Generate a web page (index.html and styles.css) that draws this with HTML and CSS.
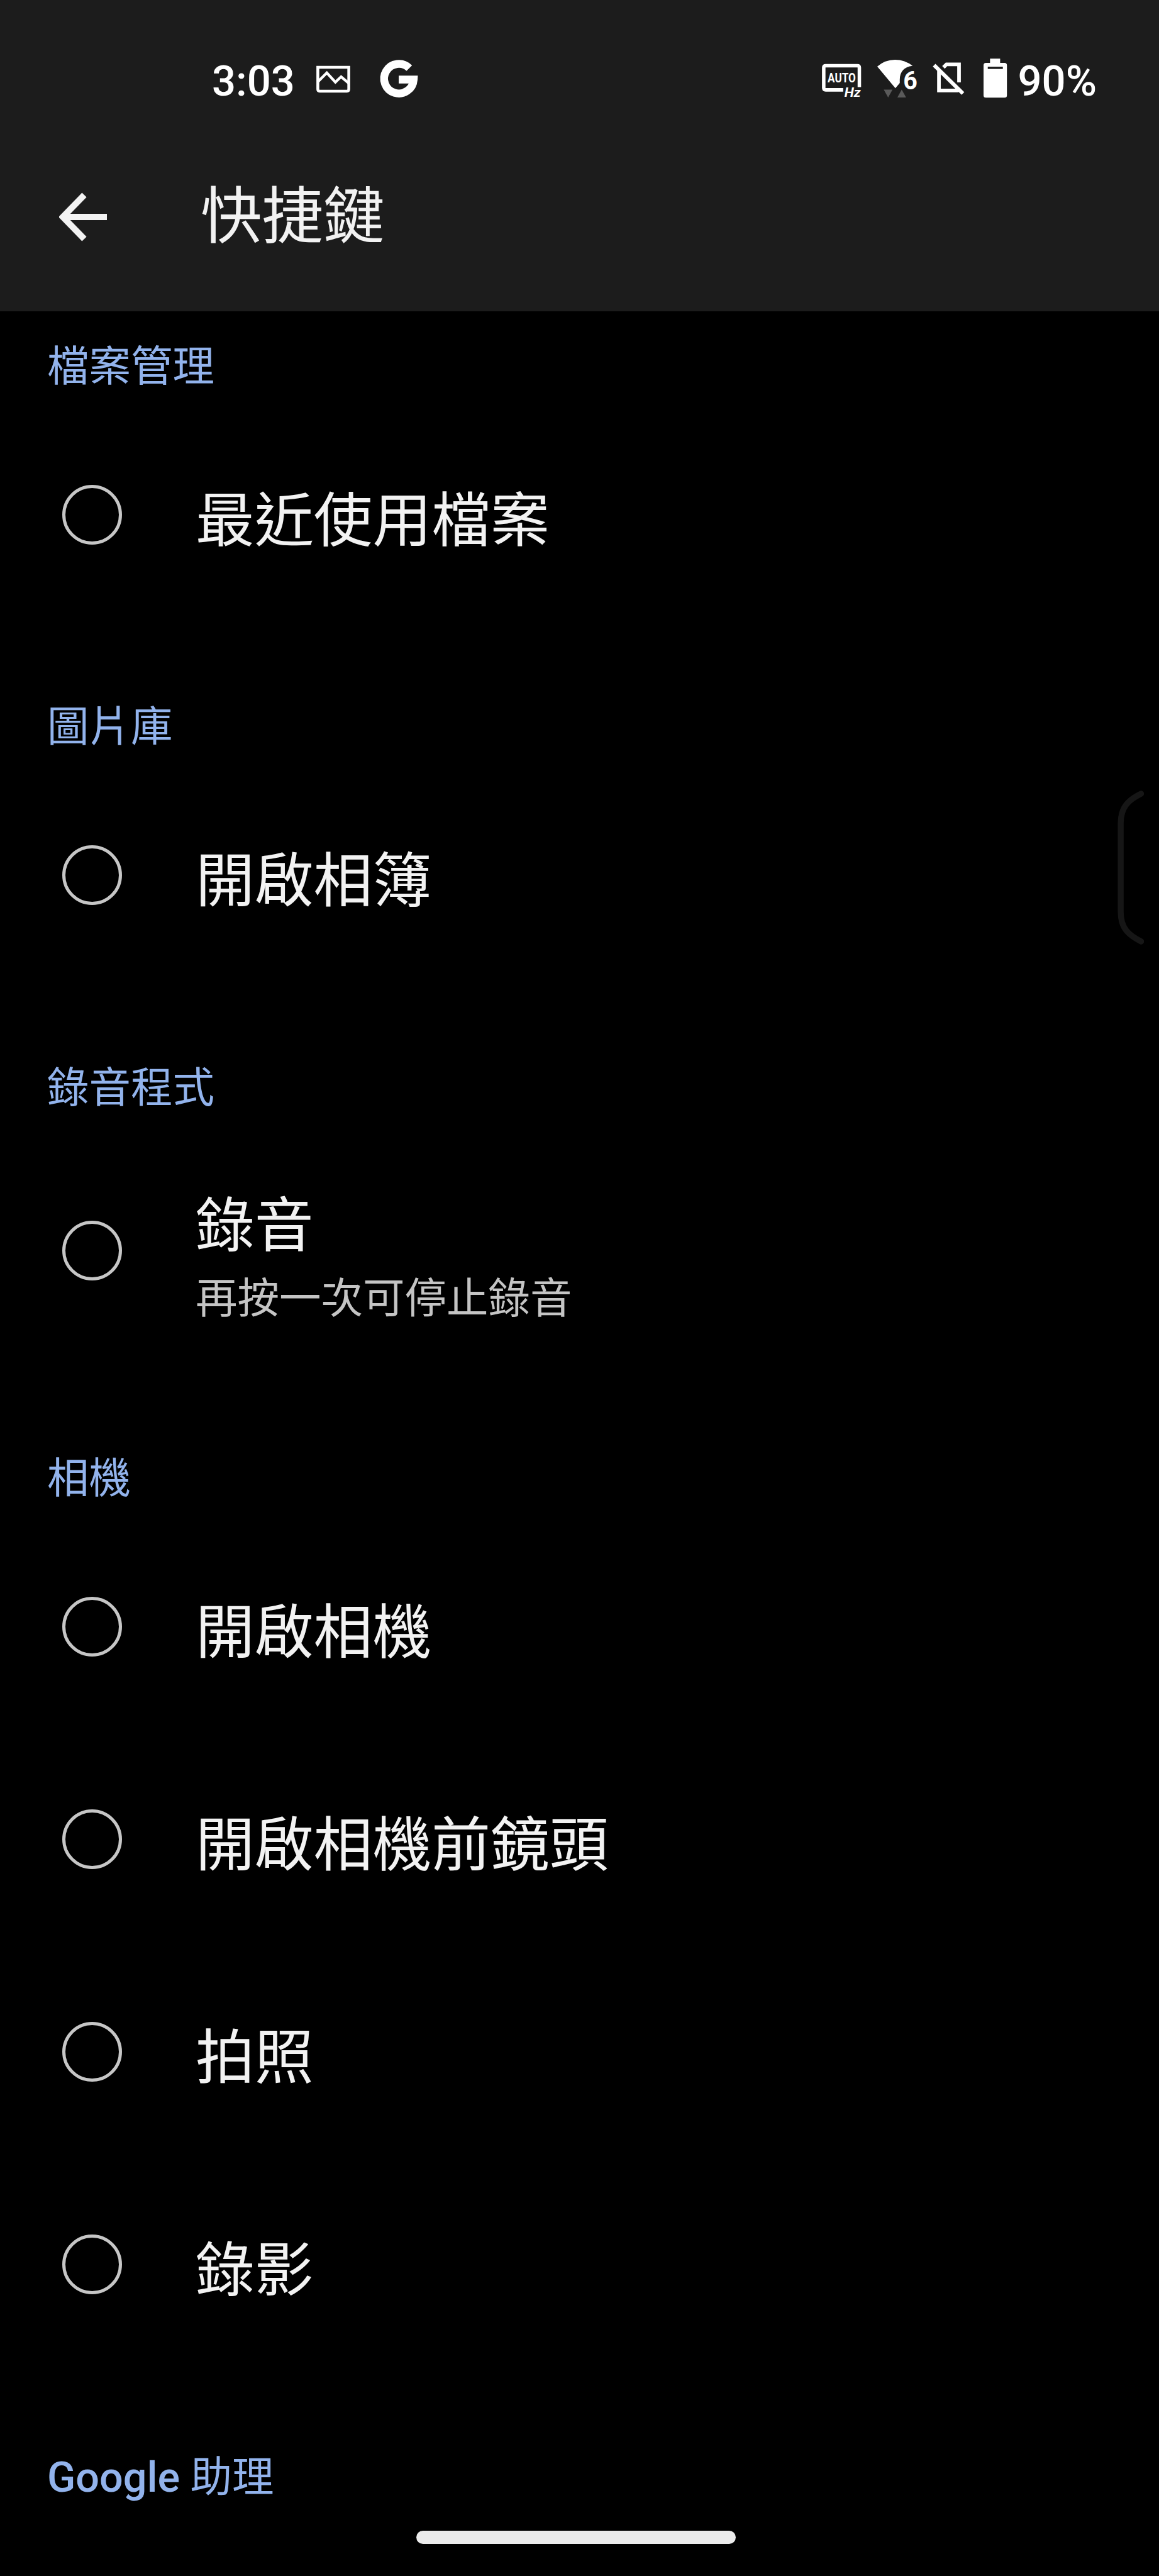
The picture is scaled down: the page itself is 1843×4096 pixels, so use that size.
FILE: index.html
```
<!DOCTYPE html>
<html lang="zh-Hant">
<head>
    <meta charset="UTF-8">
    <meta name="viewport" content="width=device-width, initial-scale=1.0">
    <title>快捷鍵</title>
    <link rel="stylesheet" href="styles.css">
</head>
<body>
    <div class="screen">
        <header class="header">
            <div class="status-bar">
                <div class="status-left">
                    <span class="status-text">3:03</span>
                    <svg class="icon icon-picture" viewBox="775 55 226 270" fill="none" stroke="#fff">
                        <path d="M785 117H991V264Q991 276 979 276H797Q785 276 785 264Z" stroke-width="19"/>
                        <path d="M787 212L845 154L902 216L940 180L990 222" stroke-width="18"/>
                    </svg>
                    <svg class="icon icon-google" viewBox="1196 55 246 270" fill="none" stroke="#fff" stroke-width="52">
                        <path d="M1387 123A98 98 0 1 0 1416 199H1317"/>
                    </svg>
                </div>
                <div class="status-right">
                    <svg class="icon icon-auto" viewBox="105 55 260 270">
                        <path d="M246 267H130Q117 267 117 254V120Q117 107 130 107H340Q353 107 353 120V249" fill="none" stroke="#fff" stroke-width="23"/>
                        <text x="143" y="219" class="auto-text" textLength="186" lengthAdjust="spacingAndGlyphs">AUTO</text>
                        <text x="254" y="312" class="hz-text" textLength="108" lengthAdjust="spacingAndGlyphs">Hz</text>
                    </svg>
                    <svg class="icon icon-wifi" viewBox="473 55 262 270">
                        <path d="M473 112Q525 67 590 67Q657 67 707 108Q622 118 622 200V222L593 256Z" fill="#fff"/>
                        <text x="645" y="262" class="wifi-text" textLength="94" lengthAdjust="spacingAndGlyphs">6</text>
                        <path d="M516 265H574L545 318ZM606 318H664L635 265Z" fill="#5a5a5a"/>
                    </svg>
                    <svg class="icon icon-sim" viewBox="838 55 212 270" fill="none" stroke="#fff">
                        <path d="M910 118L930 98H1013V218" stroke-width="24"/>
                        <path d="M880 140V271H1010" stroke-width="24"/>
                        <path d="M848 103L1039 291" stroke-width="25"/>
                    </svg>
                    <svg class="icon icon-battery" viewBox="458 55 155 270">
                        <path d="M501 60H568V88H597Q613 88 613 104V303Q613 319 597 319H474Q458 319 458 303V104Q458 88 474 88H501Z" fill="#fff"/>
                        <path d="M486 121H586" stroke="#1c1c1c" stroke-width="15"/>
                    </svg>
                    <span class="status-text">90%</span>
                </div>
            </div>
            <div class="app-bar">
                <svg class="back" viewBox="0 0 76 78" fill="none" stroke="#f2f2f2" stroke-width="10">
                    <path d="M40 4L6 39L40 74M7 39H76"/>
                </svg>
                <h1>快捷鍵</h1>
            </div>
        </header>

        <main>
            <section>
                <h2>檔案管理</h2>
                <div class="row">
                    <span class="radio"></span>
                    <div class="label">最近使用檔案</div>
                </div>
            </section>
            <section>
                <h2>圖片庫</h2>
                <div class="row">
                    <span class="radio"></span>
                    <div class="label">開啟相簿</div>
                </div>
            </section>
            <section>
                <h2>錄音程式</h2>
                <div class="row row-tall">
                    <span class="radio"></span>
                    <div>
                        <div class="label">錄音</div>
                        <div class="summary">再按一次可停止錄音</div>
                    </div>
                </div>
            </section>
            <section>
                <h2>相機</h2>
                <div class="row">
                    <span class="radio"></span>
                    <div class="label">開啟相機</div>
                </div>
                <div class="row">
                    <span class="radio"></span>
                    <div class="label">開啟相機前鏡頭</div>
                </div>
                <div class="row">
                    <span class="radio"></span>
                    <div class="label">拍照</div>
                </div>
                <div class="row">
                    <span class="radio"></span>
                    <div class="label">錄影</div>
                </div>
            </section>
            <section>
                <h2><span class="latin">Google</span> 助理</h2>
            </section>
        </main>

        <svg class="edge-handle" viewBox="0 0 58 340" fill="none" stroke="#161616" stroke-width="13" stroke-linecap="round">
            <path d="M52 7C24 21 7 36 7 72V268C7 304 24 319 52 333"/>
        </svg>
        <div class="nav-pill"></div>
    </div>
</body>
</html>
```

FILE: styles.css
```
* {
    box-sizing: border-box;
}
body {
    margin: 0;
    background-color: #000;
    color: #f2f2f2;
    font-family: Roboto, "Noto Sans CJK TC", sans-serif;
}
.screen {
    position: relative;
    width: 1843px;
    height: 4096px;
    overflow: hidden;
}
.header {
    height: 495px;
    background-color: #1c1c1c;
}
.status-bar {
    display: flex;
    justify-content: space-between;
    height: 248px;
    padding: 92px 99px 0 337px;
}
.status-left,
.status-right {
    display: flex;
    align-items: flex-start;
}
.status-text {
    color: #fff;
    font-size: 67px;
    font-weight: 500;
    line-height: 74px;
}
.icon {
    height: 64.8px;
    overflow: visible;
}
.icon-picture {
    width: 54px;
    margin-left: 34px;
}
.icon-google {
    width: 59px;
    margin-left: 48px;
}
.icon-auto {
    width: 62.4px;
    margin-right: 25.8px;
}
.icon-wifi {
    width: 62.9px;
    margin-right: 24.7px;
}
.icon-sim {
    width: 50.9px;
    margin-right: 30.8px;
}
.icon-battery {
    width: 37.2px;
    margin-right: 17px;
}
.auto-text,
.hz-text,
.wifi-text {
    fill: #fff;
    font-family: Roboto, sans-serif;
    font-weight: 700;
}
.auto-text {
    font-size: 88px;
}
.hz-text {
    font-size: 84px;
    font-style: italic;
}
.wifi-text {
    font-size: 172px;
}
.app-bar {
    display: flex;
    align-items: center;
    height: 193px;
    padding-left: 94px;
}
.back {
    width: 76px;
    height: 78px;
}
h1 {
    margin: 0 0 0 149px;
    font-size: 97.5px;
    font-weight: 400;
    line-height: 120px;
}
section {
    padding-bottom: 81.4px;
}
h2 {
    height: 154px;
    margin: 0;
    padding: 48px 0 0 75px;
    color: #92b3ec;
    font-size: 66.5px;
    font-weight: 400;
    line-height: 80px;
}
.latin {
    font-weight: 500;
}
.row {
    display: flex;
    align-items: center;
    height: 338px;
    padding-left: 99px;
}
.row-tall {
    height: 386px;
}
.radio {
    width: 95px;
    height: 95px;
    margin-right: 117px;
    border: 5px solid #c6c6c6;
    border-radius: 50%;
}
.label {
    padding-top: 22px;
    font-size: 93.8px;
    line-height: 120px;
}
.summary {
    margin-top: 10px;
    color: #c4c4c4;
    font-size: 66.5px;
    line-height: 90px;
}
.edge-handle {
    position: absolute;
    top: 1257px;
    left: 1777px;
    width: 42px;
    height: 245px;
}
.nav-pill {
    position: absolute;
    top: 4024px;
    left: 662px;
    width: 508px;
    height: 21px;
    border-radius: 11px;
    background-color: #ebebeb;
}
```
